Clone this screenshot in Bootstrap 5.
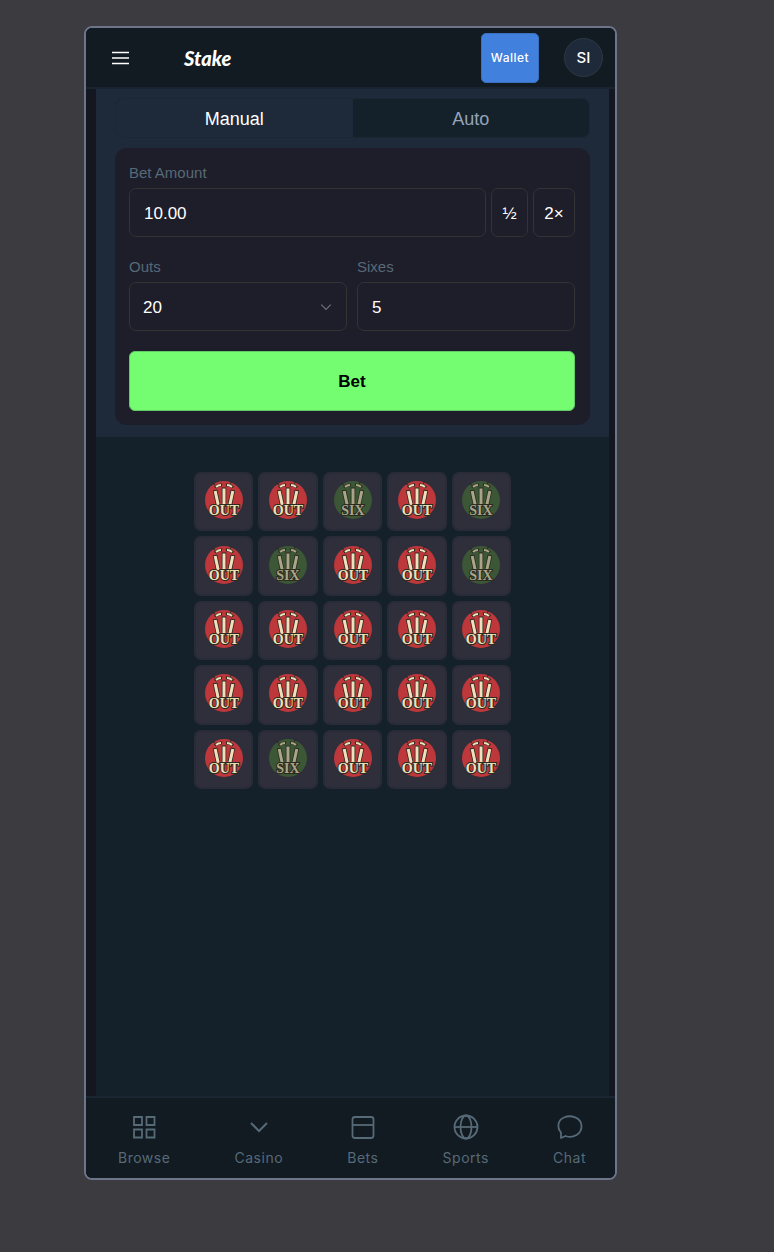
<!DOCTYPE html>
<html lang="en">
<head>
<meta charset="utf-8">
<meta name="viewport" content="width=device-width, initial-scale=1">
<title>Stake</title>
<link href="https://cdn.jsdelivr.net/npm/bootstrap@5.3.0/dist/css/bootstrap.min.css" rel="stylesheet">
<style>
  body { background: #3b3b40; padding: 26px 157px 72px 84px; font-family: "Liberation Sans", Arial, sans-serif; font-size: 17px; line-height: 24px; color: #fff; }
  .device { min-height: calc(100vh - 98px); border: 2px solid #6c758a; border-radius: 8px; background: #14171f; overflow: hidden; }
  .topbar { background: #121a22; height: 61px; border-bottom: 2px solid #1a2330; padding: 0 12px 0 24px; }
  .menu-btn { width: 22px; height: 22px; }
  .brand { margin-left: 52px; font-family: Lato, sans-serif; font-weight: 900; font-style: italic; font-size: 20px; color: #fff; text-decoration: none; }
  .wallet { width: 58px; height: 50px; border-radius: 5px; background: #4180dc; color: #fff; border: 1px solid #3a70bf; font: 500 12px/16px Inter, sans-serif; letter-spacing: .5px; margin-right: 25px; }
  .avatar { width: 39px; height: 39px; border: 1px solid #2c3944; background: #1e2a3a; font: 500 15px/20px Inter, sans-serif; color: #fff; }
  .stage { margin: 0 6px 0 10px; background: #14212b; }
  .controls { background: #1e2a3a; padding: 9px 19px 12px; }
  .modes { height: 40px; margin-bottom: 10px; border: 1px solid #1b2734; border-radius: 8px; overflow: hidden; }
  .mode-btn { border: 0; padding: 2px 0 0; background: #14212b; color: #94a3b8; font-size: 18px; }
  .mode-btn.active { background: #1e2a3a; color: #fff; }
  .bet-form { background: #1e1d2a; border-radius: 12px; padding: 14px 15px 14px 14px; }
  .bet-form label { color: #566a77; font-size: 15px; line-height: 22px; margin-bottom: 4px; display: block; }
  .amount-row { gap: 5px; margin-bottom: 19px; }
  .count-row { gap: 10px; }
  .field, .field:focus { height: 49px; background-color: #1e1d2a; border: 1px solid #333333; border-radius: 7px; color: #fff; font-size: 17px; padding: 2px 14px 0; box-shadow: none; }
  select.field { background-image: url("data:image/svg+xml,%3Csvg xmlns='http://www.w3.org/2000/svg' viewBox='0 0 10 10'%3E%3Cpath d='M1 3l4 4 4-4' fill='none' stroke='%23687080'/%3E%3C/svg%3E"); background-size: 12px 12px; background-position: right 14px center; padding-left: 13px; }
  .half { width: 37px; padding: 2px 0 0; }
  .double { width: 42px; padding: 2px 0 0; }
  .bet-btn { height: 60px; margin-top: 20px; border: 1px solid #62c966; border-radius: 6px; background: #75fd72; color: #000; font-weight: 700; font-size: 17px; padding-top: 2px; }
  .board { width: 100%; max-width: 317px; margin: 35px auto 0; display: grid; grid-template-columns: repeat(5, 1fr); gap: 5px; }
  .tile { aspect-ratio: 1; border: 2px solid #292b38; border-radius: 7px; background: #2f2e3b; padding: 0; }
  .tile svg { width: 42px; height: 42px; display: block; margin: -3px auto 0; }
  .tile text { font-family: "Liberation Serif", serif; font-weight: 700; font-size: 14px; }
  .tabs { background: #121a22; height: 82px; border-top: 2px solid #1a2733; padding: 14px 29px 0 32px; }
  .tabs a { color: #566a77; text-decoration: none; font: 400 14px/20px Inter, sans-serif; letter-spacing: .5px; }
  .tabs svg { width: 30px; height: 30px; margin-bottom: 6px; }
</style>
</head>
<body>
<svg width="0" height="0" class="position-absolute" aria-hidden="true">
  <defs>
    <g id="wicket">
      <path d="M9 4l3 2M29 2l-2 3" stroke="#26291f" stroke-width="1"/>
      <g fill="none" stroke="#2b2a20">
        <path d="M12 8.500q3-3 7-2.500M23 6q4-.5 7 2.500" stroke-width="3"/>
        <path d="M12 11l3 14M21 8.500v16M30 11l-3 14" stroke-width="4.500"/>
      </g>
      <g fill="none" stroke="currentColor">
        <path d="M13 8q2-2 5-2M24 6q3 0 5 2" stroke-width="1.800"/>
        <path d="M12.200 12l3 14M21 9.500v16M29.800 12l-3 14" stroke-width="3"/>
      </g>
    </g>
  </defs>
</svg>
<div class="device d-flex flex-column">
  <header class="topbar d-flex align-items-center flex-shrink-0">
    <button class="menu-btn btn p-0 border-0 d-flex" aria-label="Menu">
      <svg width="22" height="22" viewBox="0 0 22 22" stroke="#fff" stroke-width="1.5"><path d="M2 5.5h17M2 11h17M2 16.5h17"/></svg>
    </button>
    <a class="brand" href="#">Stake</a>
    <button class="wallet p-0 ms-auto">Wallet</button>
    <button class="avatar rounded-circle p-0">SI</button>
  </header>
  <main class="stage flex-grow-1">
    <section class="controls">
      <div class="modes d-flex">
        <button class="mode-btn active flex-fill w-50">Manual</button>
        <button class="mode-btn flex-fill w-50">Auto</button>
      </div>
      <form class="bet-form">
        <label for="amount">Bet Amount</label>
        <div class="amount-row d-flex">
          <input id="amount" class="form-control field" value="10.00">
          <button type="button" class="field half flex-shrink-0">½</button>
          <button type="button" class="field double flex-shrink-0">2×</button>
        </div>
        <div class="count-row d-flex">
          <div class="col"><label for="outs">Outs</label><select id="outs" class="form-select field"><option>20</option></select></div>
          <div class="col"><label for="sixes">Sixes</label><input id="sixes" class="form-control field" value="5"></div>
        </div>
        <button type="button" class="bet-btn w-100">Bet</button>
      </form>
    </section>
    <section class="board" id="board"></section>
  </main>
  <nav class="tabs d-flex justify-content-between flex-shrink-0">
    <a href="#" class="d-flex flex-column align-items-center"><svg viewBox="0 0 30 30" fill="none" stroke="currentColor" stroke-width="1.8"><path d="M5 5h8v8H5zM17.500 5h8v8h-8zM5 17.500h8v8H5zM17.500 17.500h8v8h-8z"/></svg>Browse</a>
    <a href="#" class="d-flex flex-column align-items-center"><svg viewBox="0 0 30 30" fill="none" stroke="currentColor" stroke-width="2"><path d="M7 11l8 8 8-8"/></svg>Casino</a>
    <a href="#" class="d-flex flex-column align-items-center"><svg viewBox="0 0 30 30" fill="none" stroke="currentColor" stroke-width="1.8"><rect x="4.500" y="5" width="21" height="21" rx="2.500"/><path d="M4.500 13h21"/></svg>Bets</a>
    <a href="#" class="d-flex flex-column align-items-center"><svg viewBox="0 0 30 30" fill="none" stroke="currentColor" stroke-width="1.8"><circle cx="15" cy="15" r="11.500"/><ellipse cx="15" cy="15" rx="5.500" ry="11.500"/><path d="M3.500 15h23"/></svg>Sports</a>
    <a href="#" class="d-flex flex-column align-items-center"><svg viewBox="0 0 30 30" fill="none" stroke="currentColor" stroke-width="1.8" stroke-linejoin="round"><path d="M6 26v-5.500C1.500 15 3 8 9 5.500c7-3 17 0 17.500 8C27 22 18 27 10.500 24z"/></svg>Chat</a>
  </nav>
</div>
<script src="https://cdn.jsdelivr.net/npm/bootstrap@5.3.0/dist/js/bootstrap.bundle.min.js"></script>
<script>
  const rows = ["OOSOS", "OSOOS", "OOOOO", "OOOOO", "OSOOO"];
  document.getElementById("board").innerHTML = [...rows.join("")].map(c => {
    const out = c === "O", word = out ? "OUT" : "SIX";
    const disc = out ? "#bd373b" : "#3b5736", ink = out ? "#eee0bb" : "#aaa587";
    return `<button class="tile" aria-label="${word}"><svg viewBox="0 0 42 42" style="color:${ink}">
      <circle cx="21" cy="21" r="19" fill="${disc}"/><use href="#wicket"/>
      <text x="21" y="36" text-anchor="middle" fill="${ink}" stroke="#2b2a20" stroke-width="2" paint-order="stroke">${word}</text></svg></button>`;
  }).join("");
</script>
</body>
</html>
